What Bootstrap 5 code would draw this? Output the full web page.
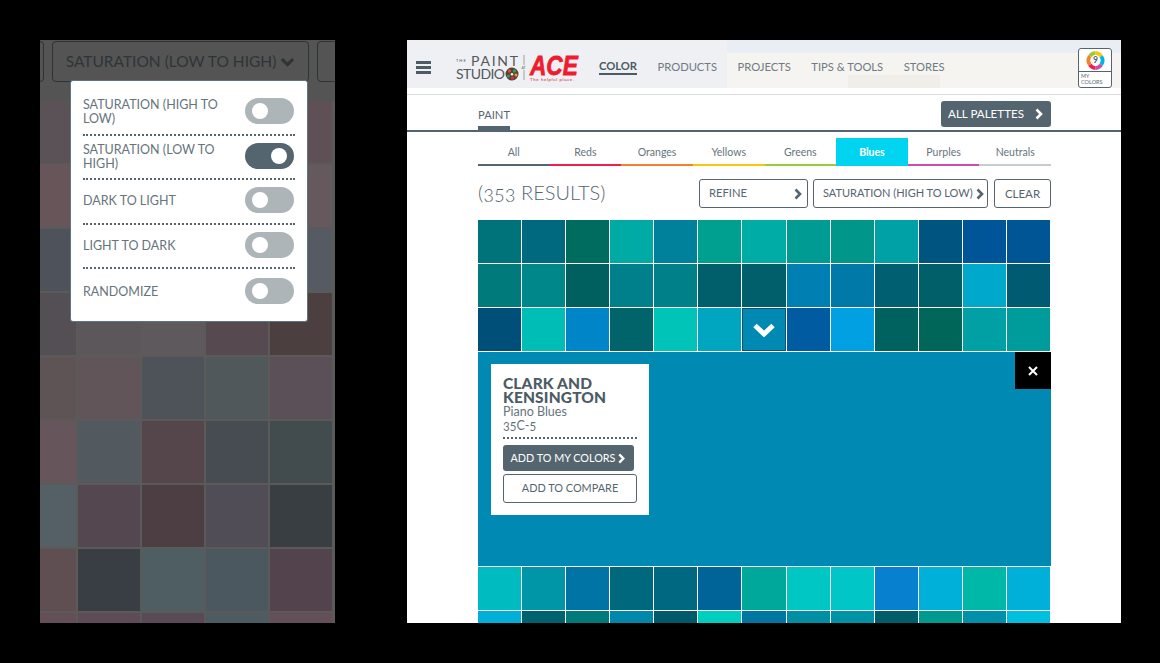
<!DOCTYPE html>
<html lang="en">
<head>
  <meta charset="UTF-8" />
  <title>The Paint Studio at Ace</title>
  <link href="https://cdn.jsdelivr.net/npm/bootstrap@5.3.3/dist/css/bootstrap.min.css" rel="stylesheet">
  <style>
    html, body { height: 100%; }
    body {
      background: #000;
      font-family: Lato, "Liberation Sans", sans-serif;
      color: #55656f;
      overflow: hidden;
    }
    .shots { padding: 40px 0 0 40px; gap: 72px; }
    .shot { height: 583px; overflow: hidden; position: relative; flex: none; }

    /* left phone shot */
    .shot-phone { width: 295px; background: #5a5a58; }
    .dim-bar { height: 61px; background: #545454; gap: 8px; padding-top: 1px; margin-left: -60px; }
    .dim-btn {
      height: 41px; flex: none; border: 1px solid #2c3235; border-radius: 4px;
      color: #2e3437; font-size: 15.5px; white-space: nowrap;
      display: flex; align-items: center; justify-content: center; gap: 4px;
    }
    .dim-btn-a { width: 64px; }
    .dim-btn-b { width: 257px; }
    .dim-btn-c { width: 60px; }
    .dim-grid { display: grid; grid-template-columns: repeat(5, 62px); grid-auto-rows: 62px; gap: 2px; margin-left: -26px; }
    .sort-menu {
      position: absolute; left: 30px; top: 40px; width: 238px; height: 242px;
      background: #fff; border: 1px solid #5d7483; border-radius: 3px; padding: 10px 12px 0;
    }
    .sort-row { height: 44.6px; border-bottom: 2px dotted #55656f; padding: 5px 1px 7px 0; font-size: 12.5px; line-height: 14px; color: #66747c; gap: 6px; }
    .sort-row:last-child { border-bottom: 0; }
    .sort-label { padding-top: 2px; }
    .sort-switch { width: 49px; height: 26px; border-radius: 13px; background: #adb5b8; flex: none; position: relative; margin-left: auto; }
    .sort-switch::after { content: ""; position: absolute; top: 5px; left: 7px; width: 16px; height: 16px; border-radius: 50%; background: #fff; }
    .sort-switch.is-on { background: #55656f; }
    .sort-switch.is-on::after { left: 26px; }

    /* right desktop shot */
    .shot-desk { width: 714px; background: #fff; }
    .top-nav {
      height: 48px; padding: 6px 9px 0;
      background:
        linear-gradient(#f1ede8, #f1ede8) 441px 35px / 92px 13px no-repeat,
        linear-gradient(#e9eef4, #e9eef4) 320px 0 / 100% 13px no-repeat,
        linear-gradient(90deg, #eef0f3 0, #eef0f3 320px, #f6f4f0 320px, #f6f4f0 100%);
    }
    .burger { width: 15px; height: 13px; border-top: 3px solid #4c5b64; border-bottom: 3px solid #4c5b64; position: relative; flex: none; }
    .burger::after { content: ""; position: absolute; left: 0; right: 0; top: 2px; height: 3px; background: #4c5b64; }
    .paint-logo { margin-left: 25px; width: 123px; height: 34px; flex: none; }
    .main-link { font-size: 11.2px; color: #6e7b83; text-decoration: none; white-space: nowrap; }
    .main-links { margin-left: 20px; gap: 20.5px; }
    .main-link.is-active { color: #4c5b64; font-weight: 700; border-bottom: 2px solid #4c5b64; line-height: 14px; }
    .my-colors { margin-left: auto; width: 34px; height: 40px; margin-top: 2px; border: 1px solid #55656f; border-radius: 3px; background: #fff; flex: none; }
    .my-colors-ring { height: 23px; border-bottom: 1px solid #55656f; }
    .my-colors-text { font-size: 5.5px; line-height: 6px; padding: 1px 2px; color: #55656f; }
    .nav-rule { height: 7px; border-bottom: 1px solid #dcdee0; }
    .sub-bar { height: 37px; border-bottom: 2px solid #55656f; padding: 6px 70px 0 71px; }
    .paint-tab { font-size: 11.2px; color: #55656f; border-bottom: 6px solid #55656f; height: 30px; padding-top: 5px; margin-bottom: -2px; align-self: flex-end; }
    .btn-solid, .btn-solid:hover { background: #55656f; color: #fff; border: 0; border-radius: 3px; }
    .btn-line, .btn-line:hover { background: #fff; color: #55656f; border: 1px solid #55656f; border-radius: 3px; }
    .btn-flat { font-size: 12px; padding: 0; display: flex; align-items: center; justify-content: center; white-space: nowrap; }
    .btn-palettes { width: 110px; height: 26px; gap: 10px; font-size: 11.6px; margin-left: auto; align-self: flex-start; }
    .page-body { padding: 6px 70px 0 71px; }
    .hue-tabs { display: grid; grid-template-columns: repeat(8, 1fr); }
    .hue-tab { height: 28px; font-size: 10.5px; color: #66747c; text-align: center; line-height: 28px; border-bottom: 2px solid #55656f; text-decoration: none; }
    .hue-tab.is-active { background: #00d4f0; color: #fff; font-weight: 700; }
    .results-row { margin-top: 13px; height: 29px; }
    .results-count { font-size: 20px; font-weight: 300; color: #55656f; line-height: 27px; font-variant-numeric: oldstyle-nums; }
    .btn-refine { width: 109px; height: 29px; margin-left: auto; justify-content: space-between; padding: 0 4px 0 9px; font-size: 11.2px; }
    .btn-sort { width: 175px; height: 29px; margin-left: 5px; gap: 2px; justify-content: flex-start; padding-left: 9px; font-size: 11px; }
    .btn-clear { width: 57px; height: 29px; margin-left: 6px; font-size: 11.5px; }
    .swatches { display: grid; grid-template-columns: repeat(13, 1fr); grid-auto-rows: 43px; gap: 1px; width: 572px; }
    .swatches-top { margin-top: 12px; }
    .swatch-sel { border: 1px solid #16506a; display: flex; align-items: center; justify-content: center; }
    .detail-panel { height: 214px; background: #0089b3; position: relative; padding: 12px 13px; margin: 1px 0; }
    .close-box { position: absolute; right: 0; top: 0; width: 36px; height: 37px; background: #000; display: flex; align-items: center; justify-content: center; }
    .color-card { width: 158px; height: 151px; background: #fff; padding: 12px 12px; }
    .color-brand { font-size: 15.5px; line-height: 14px; font-weight: 900; color: #4c5b64; letter-spacing: .15px; margin-bottom: 1px; }
    .color-name { font-size: 12.5px; line-height: 14px; color: #66747c; font-variant-numeric: oldstyle-nums; }
    .color-rule { border-top: 2px dotted #55656f; margin: 4px 0 6px; }
    .btn-add { width: 131px; height: 26px; gap: 2px; font-size: 10.8px; }
    .btn-compare { width: 134px; height: 29px; margin-top: 3px; font-size: 10.9px; }
  </style>
</head>
<body>

  <svg width="0" height="0" class="position-absolute">
    <symbol id="chev-right" viewBox="0 0 10 12"><path d="M2.5 1.5 7 6l-4.5 4.500" fill="none" stroke="currentColor" stroke-width="2.600"/></symbol>
    <symbol id="chev-down" viewBox="0 0 24 14"><path d="M3 2.500l9 8.500 9-8.500" fill="none" stroke="currentColor" stroke-width="5"/></symbol>
  </svg>

  <div class="shots d-flex">

    <!-- phone shot with the sort menu open -->
    <div class="shot shot-phone">
      <div class="dim-bar d-flex">
        <div class="dim-btn dim-btn-a"></div>
        <div class="dim-btn dim-btn-b">SATURATION (LOW TO HIGH)
          <svg width="15" height="10"><use href="#chev-down"/></svg>
        </div>
        <div class="dim-btn dim-btn-c"></div>
      </div>
      <div class="dim-grid" id="dimGrid"></div>

      <div class="sort-menu">
        <div class="sort-row d-flex align-items-center"><span class="sort-label">SATURATION (HIGH TO LOW)</span><span class="sort-switch"></span></div>
        <div class="sort-row d-flex align-items-center"><span class="sort-label">SATURATION (LOW TO HIGH)</span><span class="sort-switch is-on"></span></div>
        <div class="sort-row d-flex align-items-center"><span class="sort-label">DARK TO LIGHT</span><span class="sort-switch"></span></div>
        <div class="sort-row d-flex align-items-center"><span class="sort-label">LIGHT TO DARK</span><span class="sort-switch"></span></div>
        <div class="sort-row d-flex align-items-center"><span class="sort-label">RANDOMIZE</span><span class="sort-switch"></span></div>
      </div>
    </div>

    <!-- desktop shot -->
    <div class="shot shot-desk">
      <nav class="top-nav d-flex align-items-center">
        <div class="burger"></div>
        <svg class="paint-logo" viewBox="0 0 123 34">
          <text x="0" y="12" font-family="Lato, sans-serif" font-size="4" letter-spacing="1" fill="#55585a">THE</text>
          <text x="15" y="15.500" font-family="Lato, sans-serif" font-size="14" textLength="47" fill="#55585a">PAINT</text>
          <text x="0" y="29" font-family="Lato, sans-serif" font-size="14" textLength="49" fill="#55585a">STUDIO</text>
          <circle cx="56" cy="24" r="6.500" fill="#5a4038"/>
          <circle cx="53.500" cy="21" r="1.700" fill="#e5472f"/>
          <circle cx="58.500" cy="21" r="1.700" fill="#2f9e5b"/>
          <circle cx="60" cy="25" r="1.500" fill="#e2a52a"/>
          <circle cx="56.500" cy="28" r="1.700" fill="#c8344a"/>
          <circle cx="52.500" cy="26" r="1.600" fill="#2f9e5b"/>
          <circle cx="56" cy="24.300" r="1.300" fill="#f3f1ee"/>
          <path d="M68 5v10M68 20v10" stroke="#888" stroke-width=".8"/>
          <text x="65.500" y="19" font-family="Lato, sans-serif" font-size="3.500" fill="#55585a">AT</text>
          <text transform="translate(74 25) scale(.84 1)" font-family="'Liberation Sans', sans-serif" font-size="27" font-weight="700" font-style="italic" stroke="#ee1c2e" stroke-width=".8" fill="#ee1c2e">ACE</text>
          <text x="74" y="31" font-family="'Liberation Sans', sans-serif" font-size="4.200" fill="#c8202e" textLength="44">The helpful place.</text>
        </svg>
        <div class="main-links d-flex align-items-center">
          <a class="main-link is-active" href="#">COLOR</a>
          <a class="main-link" href="#">PRODUCTS</a>
          <a class="main-link" href="#">PROJECTS</a>
          <a class="main-link" href="#">TIPS &amp; TOOLS</a>
          <a class="main-link" href="#">STORES</a>
        </div>
        <div class="my-colors">
          <div class="my-colors-ring d-flex align-items-center justify-content-center">
            <svg width="19" height="19" viewBox="0 0 20 20">
              <g fill="none" stroke-width="4">
                <path d="M4 5.500A8 8 0 0 1 10 2" stroke="#9bcb3c"/>
                <path d="M10 2a8 8 0 0 1 6 3.500" stroke="#fcc50e"/>
                <path d="M16 5.500a8 8 0 0 1 0 9" stroke="#00b4e6"/>
                <path d="M16 14.500A8 8 0 0 1 10 18" stroke="#c94fa9"/>
                <path d="M10 18a8 8 0 0 1-6-3.500" stroke="#ef1f4f"/>
                <path d="M4 14.500a8 8 0 0 1 0-9" stroke="#f5822a"/>
              </g>
              <text x="10" y="13" text-anchor="middle" font-family="Lato, sans-serif" font-size="9" font-weight="700" fill="#55656f">9</text>
            </svg>
          </div>
          <div class="my-colors-text">MY<br>COLORS</div>
        </div>
      </nav>
      <div class="nav-rule"></div>

      <div class="sub-bar d-flex">
        <div class="paint-tab">PAINT</div>
        <button type="button" class="btn btn-solid btn-flat btn-palettes">ALL PALETTES
          <svg width="10" height="12"><use href="#chev-right"/></svg>
        </button>
      </div>

      <div class="page-body">
        <div class="hue-tabs" id="hueTabs"></div>

        <div class="results-row d-flex">
          <div class="results-count">(353 RESULTS)</div>
          <button type="button" class="btn btn-line btn-flat btn-refine">REFINE
            <svg width="10" height="12"><use href="#chev-right"/></svg>
          </button>
          <button type="button" class="btn btn-line btn-flat btn-sort">SATURATION (HIGH TO LOW)
            <svg width="10" height="12"><use href="#chev-right"/></svg>
          </button>
          <button type="button" class="btn btn-line btn-flat btn-clear">CLEAR</button>
        </div>

        <div class="swatches swatches-top" id="swatchesTop"></div>

        <div class="detail-panel">
          <div class="close-box">
            <svg width="10" height="10" viewBox="0 0 10 10"><path d="M1 1l8 8M9 1l-8 8" stroke="#fff" stroke-width="2"/></svg>
          </div>
          <div class="color-card">
            <div class="color-brand">CLARK AND KENSINGTON</div>
            <div class="color-name">Piano Blues</div>
            <div class="color-name">35C-5</div>
            <div class="color-rule"></div>
            <button type="button" class="btn btn-solid btn-flat btn-add">ADD TO MY COLORS
              <svg width="9" height="11" class="text-white"><use href="#chev-right"/></svg>
            </button>
            <button type="button" class="btn btn-line btn-flat btn-compare">ADD TO COMPARE</button>
          </div>
        </div>

        <div class="swatches" id="swatchesBottom"></div>
      </div>
    </div>
  </div>

  <script>
    const dimRows = [
      ['#5b5257','#5b5257','#5b5257','#5f5055','#5f5055'],
      ['#67555a','#67555a','#66595e','#66595e','#66595e'],
      ['#4e535b','#4e535b','#565b63','#565b63','#565b63'],
      ['#544f55','#5c575b','#5e595d','#564a50','#4b3f3f'],
      ['#5f5455','#62555a','#4e535a','#51585b','#5c5058'],
      ['#66565c','#52595f','#54464b','#474b52','#424b4d'],
      ['#556066','#54474f','#4c3e43','#504d57','#383e41'],
      ['#5f4f53','#393e45','#4f5e63','#4c5860','#52434c'],
      ['#644f58','#5f4b55','#584a57','#4c5c62','#644f58']
    ];
    const dimGrid = document.getElementById('dimGrid');
    dimRows.flat().forEach(c => {
      const d = document.createElement('div');
      d.style.background = c;
      dimGrid.appendChild(d);
    });

    const hues = [
      ['All','#55656f'],['Reds','#ef1f4f'],['Oranges','#f5822a'],['Yellows','#fcc50e'],
      ['Greens','#9bcb3c'],['Blues','#00d4f0'],['Purples','#c94fa9'],['Neutrals','#c5cdd2']
    ];
    const hueTabs = document.getElementById('hueTabs');
    hues.forEach(([name, c]) => {
      const a = document.createElement('a');
      a.href = '#';
      a.className = 'hue-tab' + (name === 'Blues' ? ' is-active' : '');
      a.textContent = name;
      a.style.borderBottomColor = c;
      hueTabs.appendChild(a);
    });

    const topColors = [
      '#00737a','#00687f','#006b5f','#00aba5','#00819b','#00a090','#00ada6','#009b92','#00978a','#00a0a7','#005580','#005598','#005594',
      '#007a7a','#00878a','#00605f','#00808a','#008088','#005f6b','#005f6b','#007fb2','#0078a8','#005f70','#005f68','#00a8cc','#005a72',
      '#004f78','#00bdb5','#0085c9','#00646a','#00c4b8','#00a6bf','sel','#005ba0','#00a0e2','#00625f','#00665a','#00a0a5','#009c9c'
    ];
    const bottomColors = [
      '#00bcc0','#0096a8','#0075a5','#00687c','#006880','#006498','#00a89c','#00c6c4','#00c6c8','#0880d0','#00b0d8','#00b8a8','#00b0d8',
      '#00b0d8','#00626f','#007a7a','#0088ab','#005a6b','#00cfc0','#0077a0','#008fa5','#0092a5','#005e6b','#009a90','#0090aa','#00c0e0'
    ];
    function fill(id, colors) {
      const box = document.getElementById(id);
      colors.forEach(c => {
        const d = document.createElement('div');
        if (c === 'sel') {
          d.className = 'swatch-sel';
          d.style.background = '#0089b3';
          d.innerHTML = '<svg width="24" height="14" class="text-white"><use href="#chev-down"/></svg>';
        } else {
          d.style.background = c;
        }
        box.appendChild(d);
      });
    }
    fill('swatchesTop', topColors);
    fill('swatchesBottom', bottomColors);
  </script>
  <script src="https://cdn.jsdelivr.net/npm/bootstrap@5.3.3/dist/js/bootstrap.bundle.min.js"></script>
</body>
</html>
